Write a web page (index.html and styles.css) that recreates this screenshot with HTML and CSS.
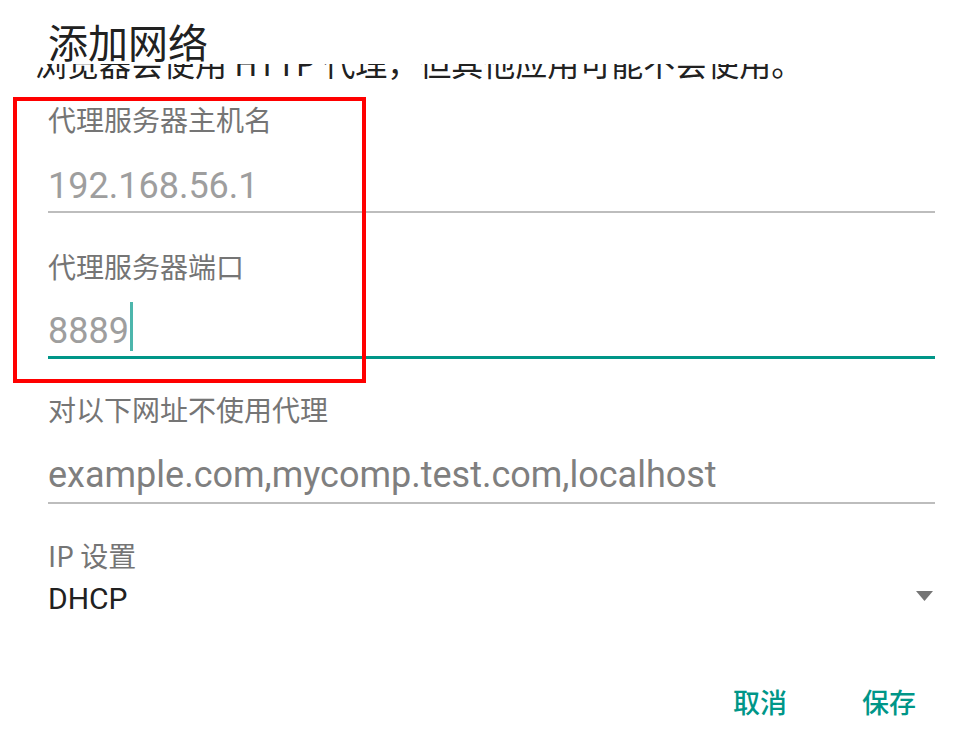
FILE: index.html
```html
<!DOCTYPE html>
<html lang="zh-CN">
<head>
<meta charset="utf-8">
<title>添加网络</title>
<link rel="stylesheet" href="styles.css">
</head>
<body>
<div class="dialog">
  <div class="header"><h1 class="title">添加网络</h1></div>
  <div class="scroll">
    <div class="content">
      <p class="intro">浏览器会使用 HTTP 代理，但其他应用可能不会使用。</p>
      <div class="field field-host">
        <div class="label">代理服务器主机名</div>
        <div class="input"><span class="value">192.168.56.1</span></div>
      </div>
      <div class="field field-port">
        <div class="label">代理服务器端口</div>
        <div class="input focused"><span class="value">8889</span><span class="cursor"></span></div>
      </div>
      <div class="field field-bypass">
        <div class="label">对以下网址不使用代理</div>
        <div class="input"><span class="value hint">example.com,mycomp.test.com,localhost</span></div>
      </div>
      <div class="ip">
        <div class="label">IP 设置</div>
        <div class="spinner"><span class="spinner-value">DHCP</span><svg class="arrow" width="17" height="10" viewBox="0 0 17 10"><path d="M0 0H17L8.5 10Z" fill="#757575"/></svg></div>
      </div>
    </div>
  </div>
  <div class="actions">
    <span class="btn">取消</span>
    <span class="btn">保存</span>
  </div>
  <div class="highlight"></div>
</div>
</body>
</html>
```

FILE: styles.css
```css
html, body {
  margin: 0;
  padding: 0;
  background: #ffffff;
}
body {
  font-family: "Roboto", "Noto Sans CJK SC", sans-serif;
  color: #212121;
  width: 963px;
  height: 735px;
  overflow: hidden;
}
.dialog {
  position: relative;
  width: 963px;
  height: 735px;
  display: flex;
  flex-direction: column;
}
.header {
  height: 64px;
  flex: none;
  padding: 0 28px 0 48px;
  background: #fff;
  box-sizing: border-box;
}
.title {
  margin: 0;
  padding-top: 21px;
  font-size: 40px;
  line-height: 40px;
  font-weight: 400;
  color: #212121;
  font-family: "Noto Sans CJK SC", sans-serif;
  white-space: nowrap;
}
.scroll {
  overflow: hidden;
  height: 580px;
  flex: none;
}
.content {
  padding: 0 28px 0 48px;
  margin-top: -18px;
}
.intro {
  margin: 0 0 0 -13px;
  font-size: 32px;
  line-height: 32px;
  color: #212121;
  font-family: "Noto Sans CJK SC", sans-serif;
  white-space: nowrap;
}
.label {
  font-size: 28px;
  line-height: 28px;
  color: #757575;
  font-family: "Noto Sans CJK SC", sans-serif;
  white-space: nowrap;
}
.field-host { margin-top: 27px; }
.field-port { margin-top: 39px; }
.field-bypass { margin-top: 36px; }
.input {
  display: flex;
  align-items: flex-end;
  height: 80px;
  padding-bottom: 7px;
  box-sizing: border-box;
  border-bottom: 2px solid #bdbdbd;
}
.input.focused {
  height: 79px;
  border-bottom: 3px solid #009688;
}
.field-bypass .input {
  height: 81px;
  padding-bottom: 9px;
}
.value {
  font-size: 36px;
  line-height: 36px;
  color: #9e9e9e;
  white-space: nowrap;
}
.value.hint {
  color: #7f7f7f;
}
.cursor {
  flex: none;
  width: 3px;
  height: 49px;
  margin-left: 1px;
  margin-bottom: -2px;
  background: #4db6ac;
}
.ip {
  margin-top: 37px;
}
.spinner {
  display: flex;
  align-items: flex-start;
  justify-content: space-between;
  margin-top: 15px;
}
.spinner-value {
  font-size: 30px;
  line-height: 30px;
  color: #212121;
}
.arrow {
  margin-top: 7px;
  margin-right: 2px;
}
.actions {
  display: flex;
  justify-content: flex-end;
  gap: 75px;
  padding: 0 47px 0 0;
  margin-top: 44px;
}
.btn {
  font-size: 27px;
  line-height: 27px;
  color: #009688;
  font-weight: 500;
  font-family: "Noto Sans CJK SC", sans-serif;
}
.highlight {
  position: absolute;
  left: 13px;
  top: 97px;
  width: 353px;
  height: 286px;
  border: 4px solid #ff0000;
  box-sizing: border-box;
}
```
